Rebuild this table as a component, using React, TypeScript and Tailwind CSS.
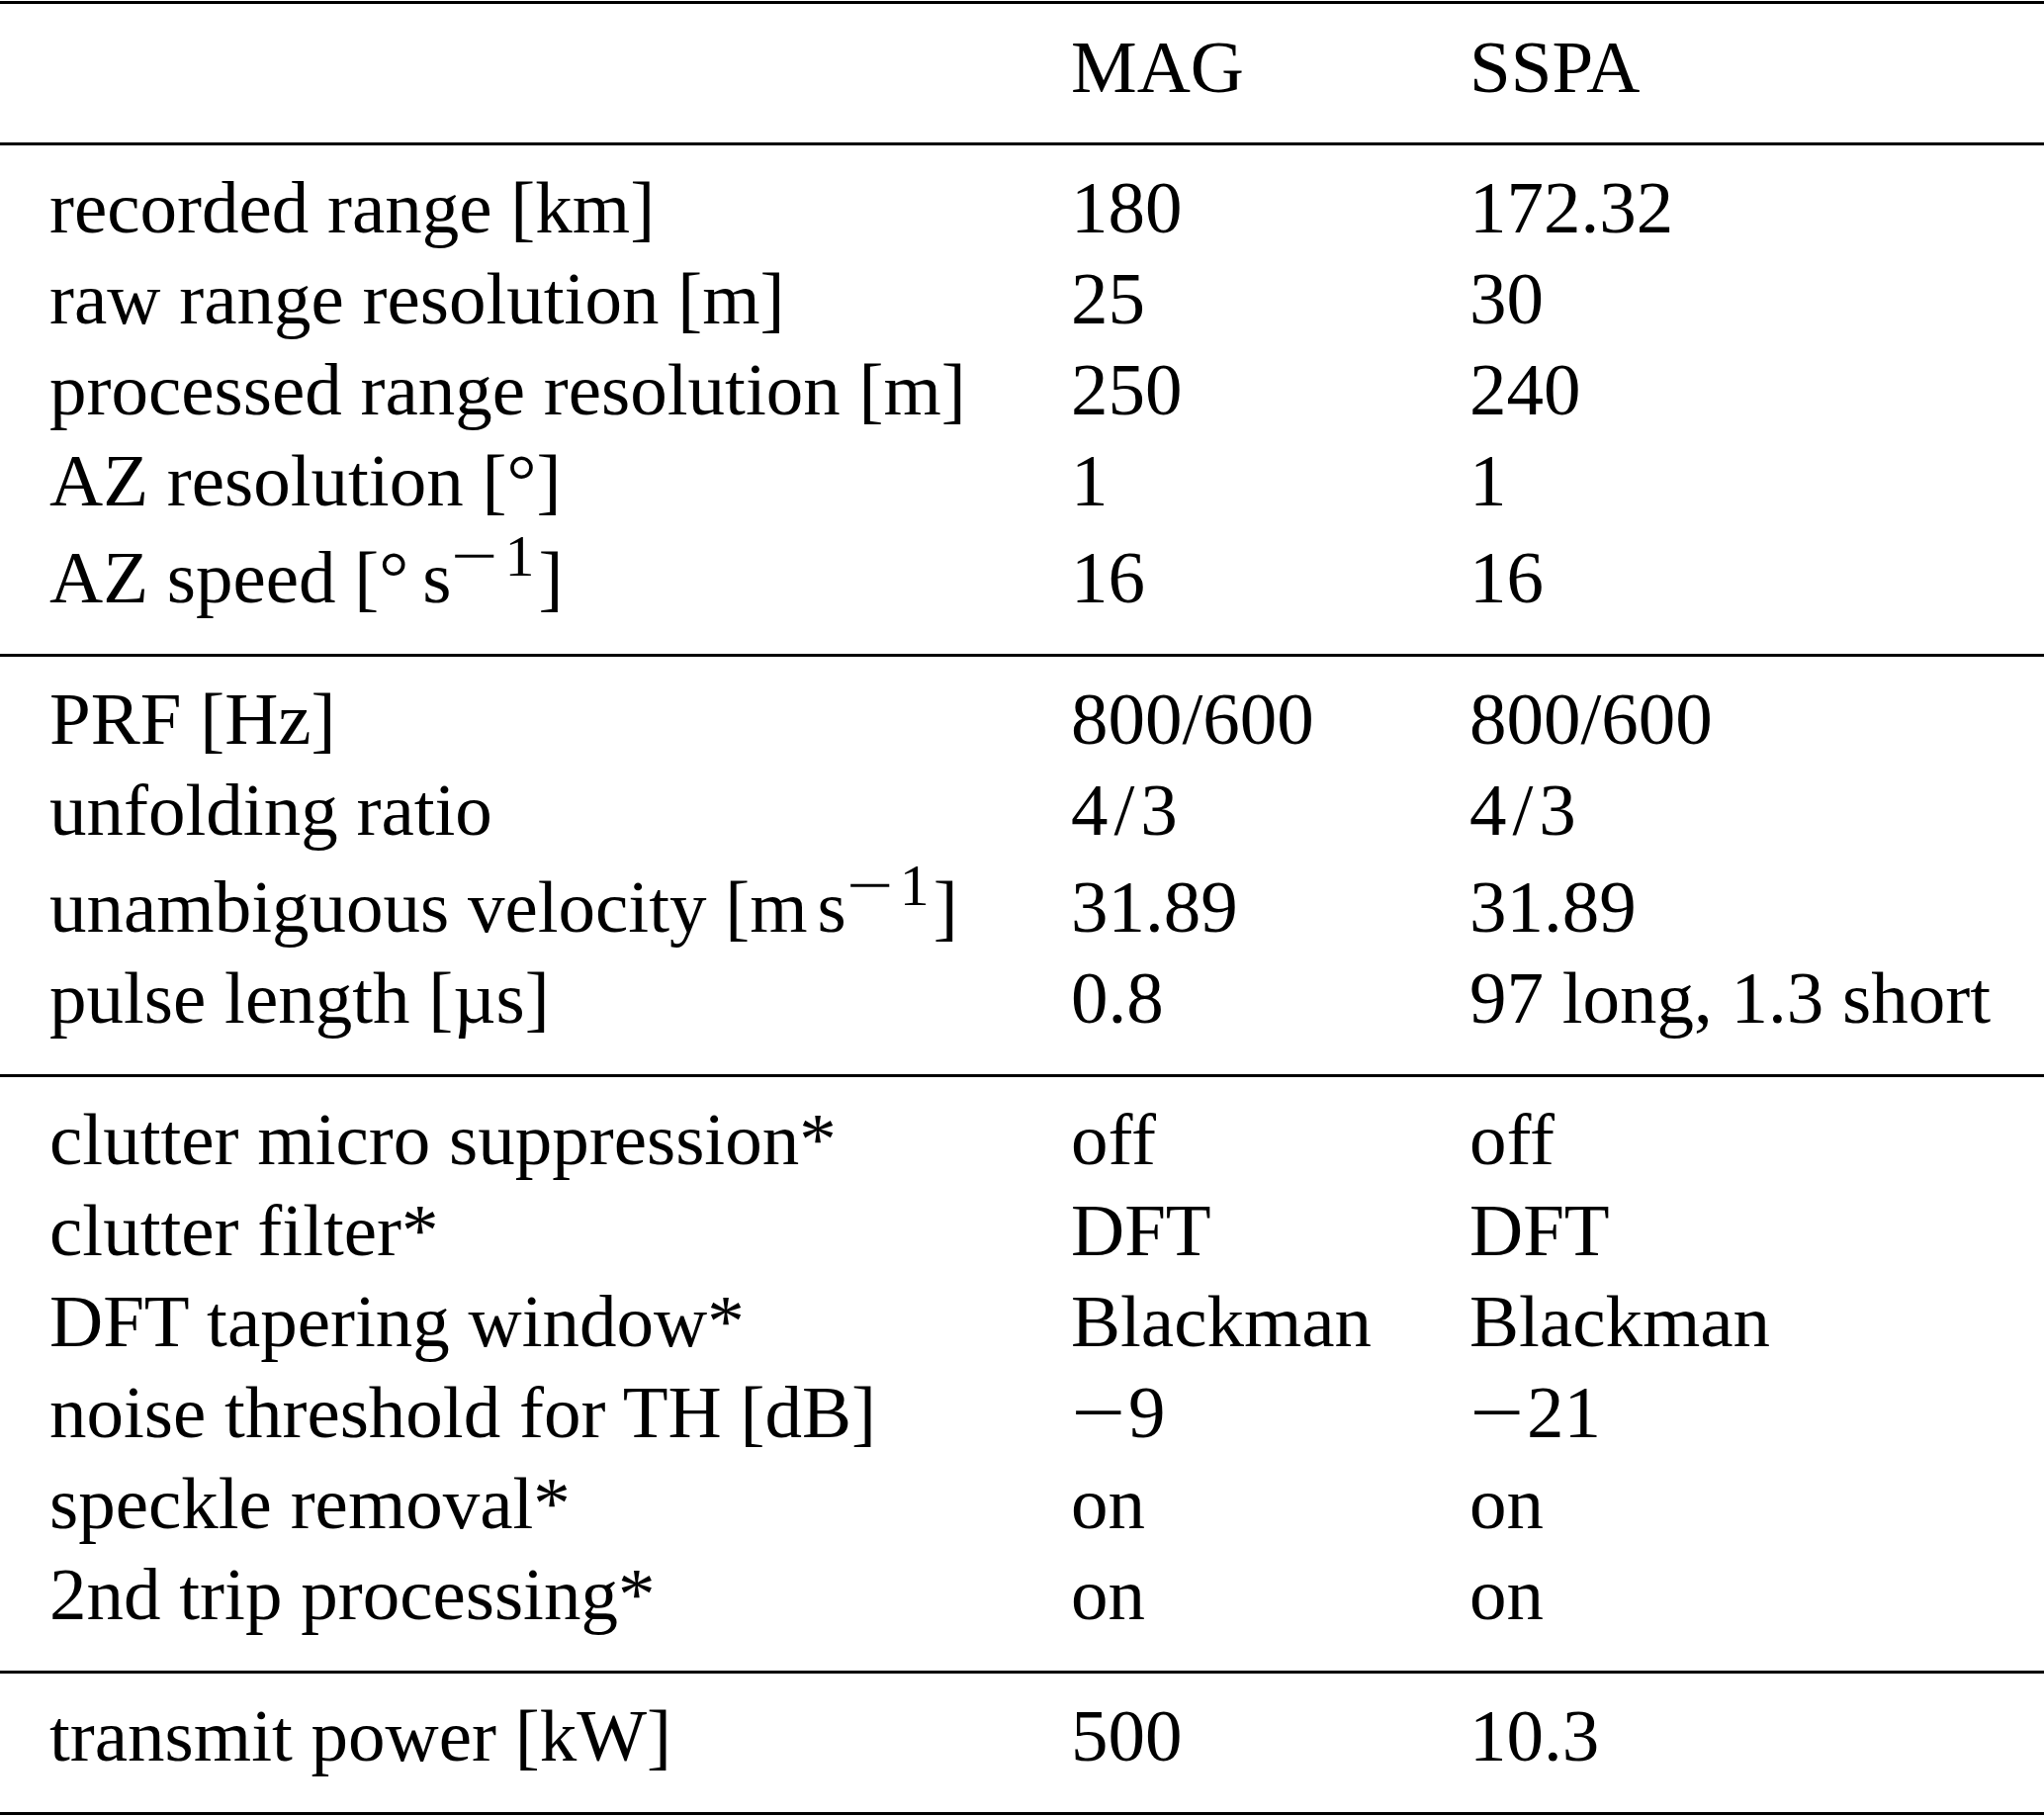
import React from "react";

const Minus = () => (
  <span className="inline-block w-[58px]">
    <span className="inline-block origin-left scale-x-[1.3]">−</span>
  </span>
);

const SupInv = () => (
  <span className="relative bottom-[27px] text-[60px] leading-none">
    <span className="inline-block w-[54px]">
      <span className="inline-block origin-left scale-x-[1.4]">−</span>
    </span>
    1
  </span>
);

type Row = { label: React.ReactNode; a: React.ReactNode; b: React.ReactNode; tall?: boolean };

const Slash = () => <span className="px-[6px]">/</span>;

const sections: Row[][] = [
  [
    { label: "recorded range [km]", a: "180", b: "172.32" },
    { label: "raw range resolution [m]", a: "25", b: "30" },
    { label: "processed range resolution [m]", a: "250", b: "240" },
    { label: "AZ resolution [°]", a: "1", b: "1" },
    {
      label: (
        <>
          AZ speed [°<span className="inline-block w-[14px]" />s
          <SupInv />
          <span className="pl-[4px]">]</span>
        </>
      ),
      a: "16",
      b: "16",
      tall: true,
    },
  ],
  [
    { label: "PRF [Hz]", a: "800/600", b: "800/600" },
    {
      label: "unfolding ratio",
      a: (
        <>
          4<Slash />3
        </>
      ),
      b: (
        <>
          4<Slash />3
        </>
      ),
    },
    {
      label: (
        <>
          unambiguous velocity [m<span className="inline-block w-[10px]" />s
          <SupInv />
          <span className="pl-[4px]">]</span>
        </>
      ),
      a: "31.89",
      b: "31.89",
      tall: true,
    },
    { label: "pulse length [µs]", a: "0.8", b: "97 long, 1.3 short" },
  ],
  [
    { label: "clutter micro suppression*", a: "off", b: "off" },
    { label: "clutter filter*", a: "DFT", b: "DFT" },
    { label: "DFT tapering window*", a: "Blackman", b: "Blackman" },
    {
      label: "noise threshold for TH [dB]",
      a: (
        <>
          <Minus />9
        </>
      ),
      b: (
        <>
          <Minus />
          21
        </>
      ),
    },
    { label: "speckle removal*", a: "on", b: "on" },
    { label: "2nd trip processing*", a: "on", b: "on" },
  ],
  [{ label: "transmit power [kW]", a: "500", b: "10.3" }],
];

function RowView({ r }: { r: Row }) {
  return (
    <div
      className={
        r.tall
          ? "grid grid-cols-[1033px_403px_1fr] h-[98px] pt-[6px] leading-[92px] whitespace-nowrap"
          : "grid grid-cols-[1033px_403px_1fr] h-[92px] leading-[92px] whitespace-nowrap"
      }
    >
      <div>{r.label}</div>
      <div>{r.a}</div>
      <div>{r.b}</div>
    </div>
  );
}

export default function App() {
  return (
    <div className="w-[2067px] min-h-[1836px] bg-white text-black font-['Liberation_Serif','Times_New_Roman',serif] text-[75px] pt-[1px]">
      <div className="border-t-[3px] border-black pt-[18px] pb-[30px] pl-[50px]">
        <div className="grid grid-cols-[1033px_403px_1fr] h-[92px] leading-[92px] whitespace-nowrap">
          <div />
          <div>MAG</div>
          <div>SSPA</div>
        </div>
      </div>
      {sections.map((sec, i) => (
        <div
          key={i}
          className={
            i === sections.length - 1
              ? "border-t-[3px] border-b-[3px] border-black pt-[17px] pb-[31px] pl-[50px]"
              : "border-t-[3px] border-black pt-[17px] pb-[31px] pl-[50px]"
          }
        >
          {sec.map((r, j) => (
            <RowView key={j} r={r} />
          ))}
        </div>
      ))}
    </div>
  );
}
